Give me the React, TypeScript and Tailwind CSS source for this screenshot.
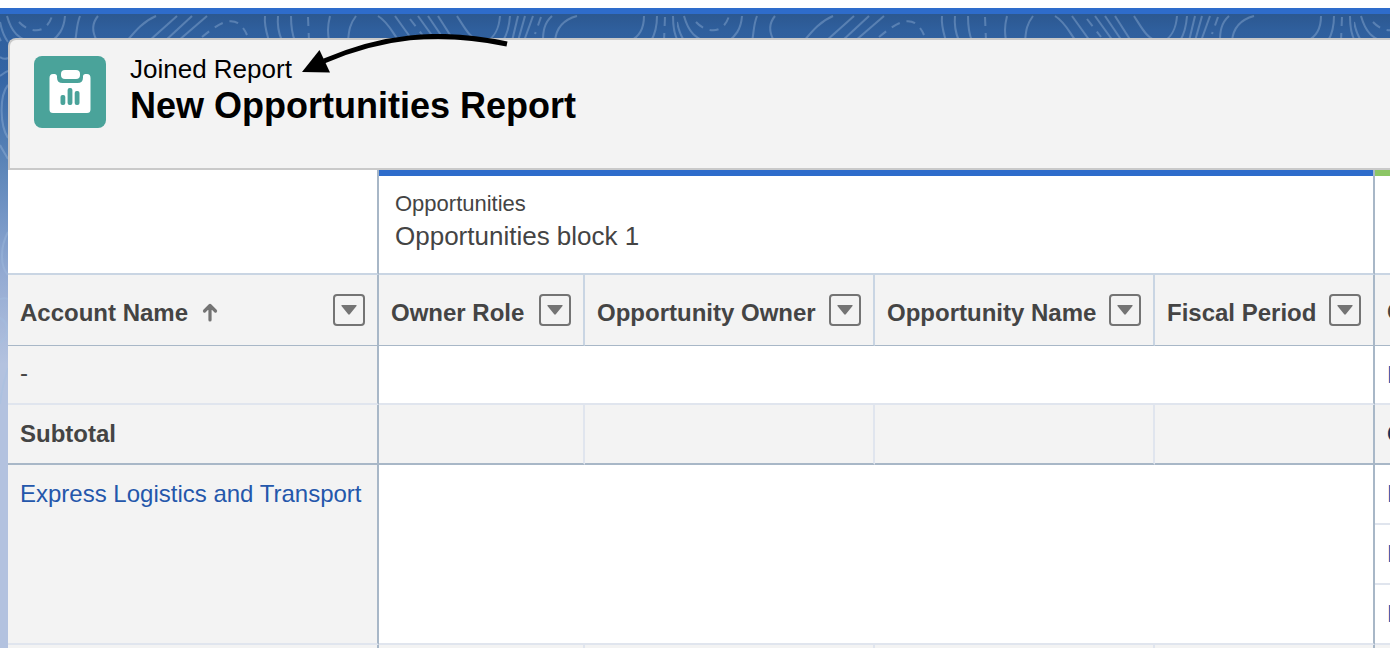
import type { ReactNode } from "react";

const WAVES: string[] = [
  "M-4 2 C-4 14 -2 22 1 27",
  "M7 2 C12 20 20 24 27 27",
  "M65 2 C64 16 58 22 52 27",
  "M80 2 C76 12 77 20 75 27",
  "M98 2 C92 9 92 18 97 27",
  "M156 2 C144 7 136 16 127 27",
  "M177 2 L149 27",
  "M192 2 L165 27",
  "M207 2 L178 27",
  "M265 2 C264 12 267 20 269 27",
  "M278 2 C277 12 279 20 282 27",
  "M291 2 C291 14 292 20 295 27",
  "M330 2 C327 14 328 20 329 27",
  "M356 2 C349 11 349 18 348 27",
  "M378 2 C388 8 392 18 399 27",
  "M395 2 L413 27",
  "M418 2 L436 27",
  "M428 2 L445 27",
  "M438 2 L454 27",
  "M457 2 C466 16 470 24 480 27",
  "M500 2 C499 16 493 24 487 27",
  "M510 2 C509 16 506 22 503 27",
  "M518 2 L512 27",
  "M525 2 L518 27",
  "M533 2 L524 27",
  "M552 2 C544 9 543 18 543 27",
  "M577 2 C562 6 556 16 555 27",
  "M644 2 C644 16 639 23 630 27",
  "M657 2 C657 14 654 22 651 27",
  "M673 2 C673 14 675 22 678 27",
];

const DASHES: string[] = [
  "M19 8 C28 18 46 22 52 2",
  "M202 23 C218 10 236 -4 247 21",
  "M308 3 L309 27",
  "M410 5 L424 23",
  "M541 3 L535 20",
  "M665 3 L664 27",
];

function Pattern() {
  return (
    <svg className="absolute inset-x-0 top-0 h-[420px] w-full" aria-hidden="true">
      <defs>
        <pattern id="contours" width="677" height="420" patternUnits="userSpaceOnUse">
          <g fill="none" stroke="#a3c0e2" strokeOpacity="0.36" strokeWidth="2">
            {WAVES.map((d) => (
              <path key={d} d={d} />
            ))}
            {DASHES.map((d) => (
              <path key={d} d={d} strokeDasharray="9 7" />
            ))}
            <path d="M0 8 C2 18 5 24 8 28 M0 43 C3 45 6 45 8 44 M8 57 C5 58 3 60 0 62 M8 71 C-1 82 0 112 8 124 M0 131 C3 137 6 141 8 145 M8 218 C-1 235 1 254 8 261 M0 285 C3 284 6 284 8 285 M0 304 C8 308 9 318 5 324 L0 329 M8 354 C5 364 2 372 0 390" />
          </g>
        </pattern>
      </defs>
      <rect width="100%" height="420" fill="url(#contours)" />
    </svg>
  );
}

function ReportIcon() {
  return (
    <svg viewBox="0 0 72 72" className="size-[72px] shrink-0 rounded-lg bg-[#4aa39a]" aria-hidden="true">
      <rect x="27" y="14" width="19" height="9" rx="4" fill="#fff" />
      <path
        d="M19 18h1.500q2.500 0 2.500 2.500v1q0 5.500 5.500 5.500h15q5.500 0 5.500-5.500v-1q0-2.500 2.500-2.500h1.500q3.500 0 3.500 4v31.500q0 3.500-3.500 3.500h-34q-3.500 0-3.500-3.500V22q0-4 3.500-4z"
        fill="#fff"
      />
      <g fill="#4aa39a">
        <rect x="26.500" y="39" width="4.800" height="10" rx="2" />
        <rect x="33.600" y="32" width="4.800" height="17" rx="2" />
        <rect x="40.700" y="35" width="4.800" height="14" rx="2" />
      </g>
    </svg>
  );
}

function MenuButton({ label }: { label: string }) {
  return (
    <button
      type="button"
      aria-label={`${label} actions`}
      className="flex size-8 shrink-0 items-center justify-center rounded border-2 border-[#747474] bg-[#f3f3f3]"
    >
      <svg viewBox="0 0 16 10" className="h-[10px] w-4" aria-hidden="true">
        <path d="M0.800 0H15.200Q16 0.300 15.500 1L8.800 9.300Q8 10 7.200 9.300L0.500 1Q0 0.300 0.800 0z" fill="#747474" />
      </svg>
    </button>
  );
}

function HeaderCell({ label, edge, children }: { label: string; edge: string; children?: ReactNode }) {
  return (
    <th scope="col" className={`h-[71px] border-b border-b-[#a8b7c7] bg-[#f3f3f3] px-3 text-left ${edge}`}>
      <div className="flex items-center justify-between whitespace-nowrap">
        <span className="flex items-center gap-[14px] pt-[6px]">
          {label}
          {children}
        </span>
        <MenuButton label={label} />
      </div>
    </th>
  );
}

const DARK = "border-r-2 border-r-[#a8b7c7]";
const MID = "border-r-2 border-r-[#c9d5e3]";
const PALE = "border-r-2 border-r-[#e0e5ee]";
const LINE = "border-b-2 border-b-[#e0e5ee]";
const HEAVY = "border-b-2 border-b-[#a8b7c7]";

function LinkCell() {
  return (
    <td className={`h-[60px] overflow-hidden bg-white pl-3 ${LINE}`}>
      <a href="#" className="text-[#2457ab]">E</a>
    </td>
  );
}

export default function App() {
  return (
    <div className="h-screen overflow-hidden bg-white pt-2 font-['Liberation_Sans',Arial,sans-serif] text-2xl text-[#444]">
      <div className="h-[6px] bg-[#2e6ccb]" />
      <div className="relative bg-[#b3c2df] bg-[linear-gradient(#2c5890_0px,#2f5f9d_16px,#3464a4_60px,#5b85b8_150px,#7395c5_200px,#93aad2_260px,#b3c2df_350px)] pt-6 pl-2">
        <Pattern />
        <div className="relative">
          <header className="flex h-[132px] items-start gap-6 rounded-tl-lg border-y-2 border-l-2 border-[#c9c9c9] bg-[#f3f3f3] pt-4 pl-6 text-black">
            <ReportIcon />
            <div>
              <p className="text-[26px] leading-[26px]">Joined Report</p>
              <h1 className="text-4xl leading-[48px] font-bold">New Opportunities Report</h1>
            </div>
          </header>
          <svg viewBox="0 0 210 44" className="absolute -top-1 left-[294px] h-11 w-[210px]" aria-hidden="true">
            <path d="M22 27 C78 3 134 -5 205 10" fill="none" stroke="#000" strokeWidth="5" />
            <path d="M0 38 L17.500 16 L28 38.500z" fill="#000" />
          </svg>
          <table className="w-full table-fixed border-separate border-spacing-0 bg-white">
            <colgroup>
              <col className="w-[371px]" />
              <col className="w-[206px]" />
              <col className="w-[290px]" />
              <col className="w-[280px]" />
              <col className="w-[220px]" />
              <col />
            </colgroup>
            <thead>
              <tr>
                <td className={`h-[105px] border-b-2 border-b-[#c9d5e3] ${DARK}`} />
                <th
                  scope="colgroup"
                  colSpan={4}
                  className={`border-b-2 border-b-[#c9d5e3] bg-[linear-gradient(#2e6ccb,#2e6ccb)] bg-[length:100%_6px] bg-no-repeat px-4 text-left font-normal ${DARK}`}
                >
                  <p className="text-[22px] leading-7">Opportunities</p>
                  <p className="text-[26px] leading-9">Opportunities block 1</p>
                </th>
                <td className="border-t-[6px] border-b-2 border-t-[#8cc665] border-b-[#c9d5e3]" />
              </tr>
              <tr>
                <HeaderCell label="Account Name" edge={DARK}>
                  <svg viewBox="0 0 16 20" className="h-5 w-4" aria-hidden="true">
                    <path d="M8 17V3M2.500 8L8 2.500L13.500 8" fill="none" stroke="#747474" strokeWidth="3.200" strokeLinecap="round" strokeLinejoin="round" />
                    <path d="M8 1.500L12.500 7H3.500z" fill="#747474" />
                  </svg>
                </HeaderCell>
                <HeaderCell label="Owner Role" edge={MID} />
                <HeaderCell label="Opportunity Owner" edge={MID} />
                <HeaderCell label="Opportunity Name" edge={MID} />
                <HeaderCell label="Fiscal Period" edge={DARK} />
                <th scope="col" className="overflow-hidden border-b border-b-[#a8b7c7] bg-[#f3f3f3] pt-1 pl-3 text-left">
                  C
                </th>
              </tr>
            </thead>
            <tbody>
              <tr>
                <th scope="row" className={`h-[59px] bg-[#f3f3f3] px-3 pb-1 text-left font-normal ${LINE} ${DARK}`}>-</th>
                <td colSpan={4} className={`${LINE} ${DARK}`} />
                <td className={`overflow-hidden pl-3 ${LINE}`}>
                  <a href="#" className="text-[#2457ab]">E</a>
                </td>
              </tr>
              <tr className="bg-[#f3f3f3]">
                <th scope="row" className={`h-[60px] px-3 text-left ${HEAVY} ${DARK}`}>Subtotal</th>
                <td className={`${HEAVY} ${PALE}`} />
                <td className={`${HEAVY} ${PALE}`} />
                <td className={`${HEAVY} ${PALE}`} />
                <td className={`${HEAVY} ${DARK}`} />
                <td className={`overflow-hidden pl-3 font-bold text-[#16325c] ${HEAVY}`}>C</td>
              </tr>
              <tr>
                <th
                  scope="row"
                  rowSpan={3}
                  className={`bg-[#f3f3f3] px-3 pt-[13px] text-left align-top font-normal whitespace-nowrap ${LINE} ${DARK}`}
                >
                  <a href="#" className="text-[#2457ab]">Express Logistics and Transport</a>
                </th>
                <td rowSpan={3} colSpan={4} className={`${LINE} ${DARK}`} />
                <LinkCell />
              </tr>
              <tr>
                <LinkCell />
              </tr>
              <tr>
                <LinkCell />
              </tr>
              <tr className="bg-[#f3f3f3]">
                <th className={`h-[60px] ${DARK}`} />
                <td className={PALE} />
                <td className={PALE} />
                <td className={PALE} />
                <td className={DARK} />
                <td />
              </tr>
            </tbody>
          </table>
        </div>
      </div>
    </div>
  );
}
